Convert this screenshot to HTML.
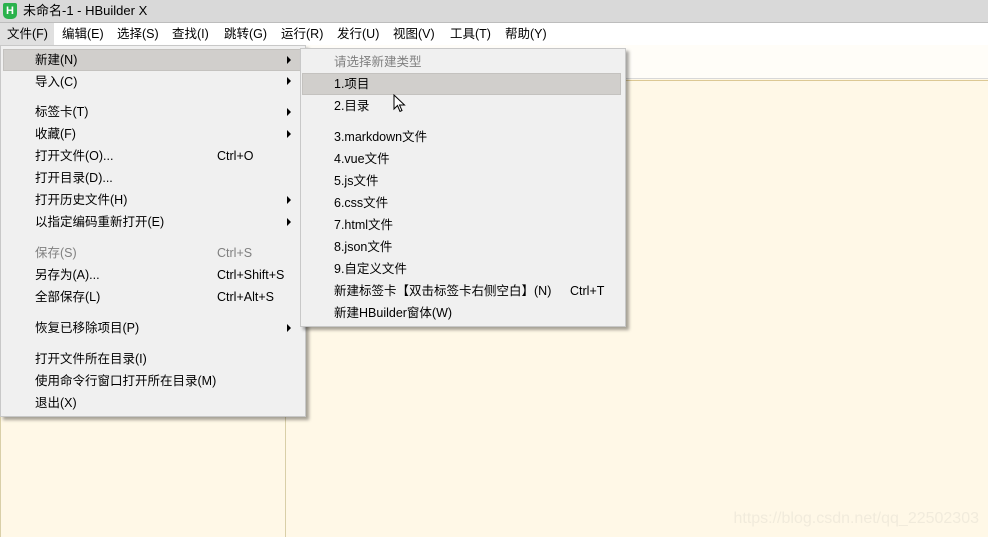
<!DOCTYPE html>
<html><head><meta charset="utf-8"><style>
*{margin:0;padding:0;box-sizing:border-box}
body{width:988px;height:537px;overflow:hidden;position:relative;background:#fff8e7;font-family:"Liberation Sans","Noto Sans CJK SC",sans-serif;font-size:12.5px;color:#000}
.abs{position:absolute}
#title{left:0;top:0;width:988px;height:23px;background:#d9d9d9;border-bottom:1px solid #bdbdbd}
#title span{position:absolute;left:23px;top:3px;font-size:13px;line-height:16px}
#logo{left:3px;top:3px;width:14px;height:16px;background:#2bb24c;border-radius:2px 2px 5px 5px;color:#fff;font-size:11px;font-weight:bold;text-align:center;line-height:16px}
#menubar{left:0;top:23px;width:988px;height:22px;background:#fff}
.mb{position:absolute;top:3px;line-height:16px}
#filehl{left:0;top:23px;width:54px;height:22px;background:#e0e0e0}
#tool{left:0;top:45px;width:988px;height:33px;background:#fffdf8}
#l1{left:0;top:78px;width:988px;height:1px;background:#d8d8d8}
#l2{left:0;top:80px;width:988px;height:1px;background:#dcc894}
#vl{left:285px;top:81px;width:1px;height:456px;background:#d9cfa8}
#vl0{left:0;top:81px;width:1px;height:456px;background:#d9cfa8}
.menu{position:absolute;background:#f0f0f0;border:1px solid #c8c8c8;box-shadow:3px 3px 3px rgba(0,0,0,.35)}
.it{position:absolute;white-space:nowrap;line-height:16px}
.hl{position:absolute;background:#d1cfcc;border:1px solid #c4c2bf}
.ar{position:absolute;width:0;height:0;border-left:4px solid #000;border-top:4px solid transparent;border-bottom:4px solid transparent}
.g{color:#808080}
#wm{right:9px;top:510px;color:#f1ebdc;font-size:16px;line-height:18px}
</style></head><body>
<div id="title" class="abs"><span>未命名-1 - HBuilder X</span></div>
<div id="logo" class="abs">H</div>
<div id="menubar" class="abs"></div>
<div id="filehl" class="abs"></div>
<div class="abs" style="left:0;top:23px;width:988px;height:22px">
<span class="mb" style="left:7px">文件(F)</span><span class="mb" style="left:62px">编辑(E)</span><span class="mb" style="left:117px">选择(S)</span><span class="mb" style="left:172px">查找(I)</span><span class="mb" style="left:224px">跳转(G)</span><span class="mb" style="left:281px">运行(R)</span><span class="mb" style="left:337px">发行(U)</span><span class="mb" style="left:393px">视图(V)</span><span class="mb" style="left:450px">工具(T)</span><span class="mb" style="left:505px">帮助(Y)</span>
</div>
<div id="tool" class="abs"></div>
<div id="l1" class="abs"></div><div id="l2" class="abs"></div>
<div id="vl" class="abs"></div><div id="vl0" class="abs"></div>
<div id="wm" class="abs">https://blog.csdn.net/qq_22502303</div>

<div class="menu" style="left:0;top:45px;width:306px;height:372px"></div>
<div class="hl" style="left:3px;top:49px;width:298px;height:22px"></div>
<div class="abs" style="left:0;top:0">
<span class="it" style="left:35px;top:52px">新建(N)</span>
<span class="it" style="left:35px;top:74px">导入(C)</span>
<span class="it" style="left:35px;top:104px">标签卡(T)</span>
<span class="it" style="left:35px;top:126px">收藏(F)</span>
<span class="it" style="left:35px;top:148px">打开文件(O)...</span><span class="it" style="left:217px;top:148px">Ctrl+O</span>
<span class="it" style="left:35px;top:170px">打开目录(D)...</span>
<span class="it" style="left:35px;top:192px">打开历史文件(H)</span>
<span class="it" style="left:35px;top:214px">以指定编码重新打开(E)</span>
<span class="it g" style="left:35px;top:245px">保存(S)</span><span class="it g" style="left:217px;top:245px">Ctrl+S</span>
<span class="it" style="left:35px;top:267px">另存为(A)...</span><span class="it" style="left:217px;top:267px">Ctrl+Shift+S</span>
<span class="it" style="left:35px;top:289px">全部保存(L)</span><span class="it" style="left:217px;top:289px">Ctrl+Alt+S</span>
<span class="it" style="left:35px;top:320px">恢复已移除项目(P)</span>
<span class="it" style="left:35px;top:351px">打开文件所在目录(I)</span>
<span class="it" style="left:35px;top:373px">使用命令行窗口打开所在目录(M)</span>
<span class="it" style="left:35px;top:395px">退出(X)</span>
<div class="ar" style="left:287px;top:56px"></div>
<div class="ar" style="left:287px;top:77px"></div>
<div class="ar" style="left:287px;top:108px"></div>
<div class="ar" style="left:287px;top:130px"></div>
<div class="ar" style="left:287px;top:196px"></div>
<div class="ar" style="left:287px;top:218px"></div>
<div class="ar" style="left:287px;top:324px"></div>
</div>

<div class="menu" style="left:300px;top:48px;width:326px;height:279px"></div>
<div class="hl" style="left:302px;top:73px;width:319px;height:22px"></div>
<div class="abs" style="left:0;top:0">
<span class="it g" style="left:334px;top:54px">请选择新建类型</span>
<span class="it" style="left:334px;top:76px">1.项目</span>
<span class="it" style="left:334px;top:98px">2.目录</span>
<span class="it" style="left:334px;top:129px">3.markdown文件</span>
<span class="it" style="left:334px;top:151px">4.vue文件</span>
<span class="it" style="left:334px;top:173px">5.js文件</span>
<span class="it" style="left:334px;top:195px">6.css文件</span>
<span class="it" style="left:334px;top:217px">7.html文件</span>
<span class="it" style="left:334px;top:239px">8.json文件</span>
<span class="it" style="left:334px;top:261px">9.自定义文件</span>
<span class="it" style="left:334px;top:283px">新建标签卡【双击标签卡右侧空白】(N)</span><span class="it" style="left:570px;top:283px">Ctrl+T</span>
<span class="it" style="left:334px;top:305px">新建HBuilder窗体(W)</span>
</div>
<svg class="abs" style="left:393px;top:94px" width="14" height="20" viewBox="0 0 14 20"><path d="M1 1 L1 15 L4.5 11.5 L7 17.5 L9 16.5 L6.5 11 L11.5 11 Z" fill="#fff" stroke="#000" stroke-width="1"/></svg>
</body></html>
